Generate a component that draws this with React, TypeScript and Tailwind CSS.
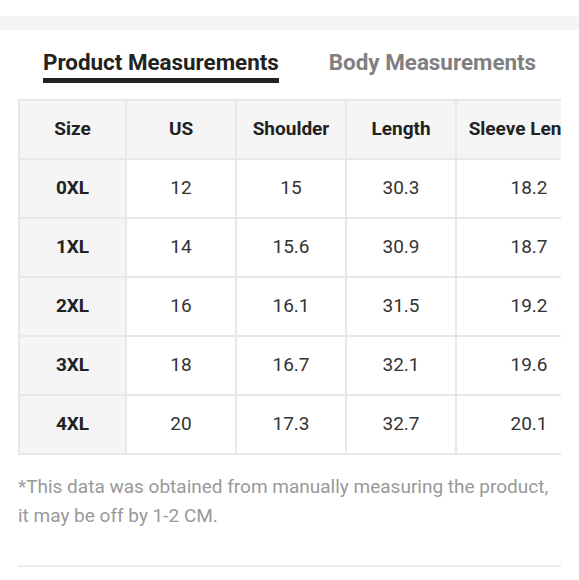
const headers = ['Size', 'US', 'Shoulder', 'Length', 'Sleeve Length']

const rows = [
  ['0XL', '12', '15', '30.3', '18.2'],
  ['1XL', '14', '15.6', '30.9', '18.7'],
  ['2XL', '16', '16.1', '31.5', '19.2'],
  ['3XL', '18', '16.7', '32.1', '19.6'],
  ['4XL', '20', '17.3', '32.7', '20.1'],
]

const colWidths = ['w-[107px]', 'w-[110px]', 'w-[110px]', 'w-[110px]', 'w-[146px]']

export default function App() {
  return (
    <div className="w-[579px] h-[580px] bg-white font-['Roboto',sans-serif] overflow-hidden">
      <div className="h-4" />
      <div className="h-[14px] bg-[#f5f5f5]" />

      {/* Tabs */}
      <div className="flex gap-[50px] pl-[43px] pt-[18px]">
        <div className="flex flex-col">
          <span className="text-[22.4px] font-bold leading-[28px] text-[#222]">
            Product Measurements
          </span>
          <div className="mt-[2px] h-[5px] bg-[#222]" />
        </div>
        <span className="text-[22.4px] font-bold leading-[28px] text-[#808080]">
          Body Measurements
        </span>
      </div>

      {/* Table */}
      <div className="ml-[18px] mt-[16px] w-[543px] overflow-hidden">
        <table className="border-collapse table-fixed w-[583px]">
          <thead>
            <tr className="h-[59px] bg-[#f5f5f5]">
              {headers.map((h, i) => (
                <th
                  key={h}
                  className={`${colWidths[i]} border-2 border-[#e8e8e8] text-[19px] font-bold text-[#222] whitespace-nowrap text-center`}
                >
                  {h}
                </th>
              ))}
            </tr>
          </thead>
          <tbody>
            {rows.map((r) => (
              <tr key={r[0]} className="h-[59px]">
                {r.map((c, i) => (
                  <td
                    key={i}
                    className={
                      i === 0
                        ? 'border-2 border-[#e8e8e8] bg-[#f5f5f5] text-[19px] font-bold text-[#222] text-center'
                        : 'border-2 border-[#e8e8e8] text-[19px] text-[#333] text-center'
                    }
                  >
                    {c}
                  </td>
                ))}
              </tr>
            ))}
          </tbody>
        </table>
      </div>

      {/* Note */}
      <p className="mx-[18px] mt-[17px] text-[19px] leading-[29px] text-[#999]">
        *This data was obtained from manually measuring the product, it may be off by 1-2 CM.
      </p>

      <div className="mx-[18px] mt-[35px] h-[2px] bg-[#ececec]" />
    </div>
  )
}
